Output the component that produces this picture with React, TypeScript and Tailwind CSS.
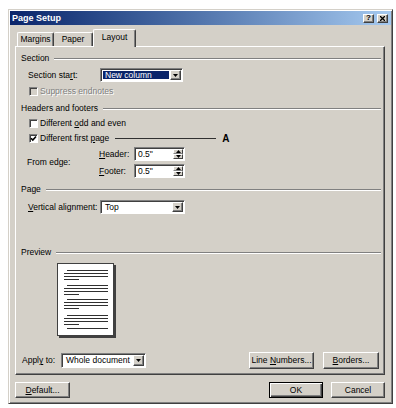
import React from "react";

const raised =
  "border border-t-white border-l-white border-r-[#404040] border-b-[#404040] shadow-[inset_-1px_-1px_#808080]";
const sunken =
  "border border-t-[#808080] border-l-[#808080] border-r-white border-b-white shadow-[inset_1px_1px_#404040]";

function DownTri() {
  return (
    <svg width="5" height="3" viewBox="0 0 5 3">
      <path d="M0 0 H5 L2.5 3 Z" fill="black" />
    </svg>
  );
}

function UpTri() {
  return (
    <svg width="5" height="3" viewBox="0 0 5 3">
      <path d="M0 3 H5 L2.5 0 Z" fill="black" />
    </svg>
  );
}

function Check({ checked, disabled }: { checked?: boolean; disabled?: boolean }) {
  return (
    <span
      className={`w-[9px] h-[9px] shrink-0 flex items-center justify-center ${sunken} ${
        disabled ? "bg-[#d4d0c8]" : "bg-white"
      }`}
    >
      {checked ? (
        <svg width="7" height="7" viewBox="0 0 7 7">
          <path d="M1 3.2 L2.8 5 L6 1.5" stroke="black" strokeWidth="1.6" fill="none" />
        </svg>
      ) : null}
    </span>
  );
}

function Combo({
  className,
  text,
  selected,
}: {
  className: string;
  text: string;
  selected?: boolean;
}) {
  return (
    <div className={`${sunken} bg-white flex items-stretch p-px ${className}`}>
      <div className="flex-1 flex items-stretch p-px">
        <span
          className={`flex-1 flex items-center pl-[2px] ${
            selected ? "bg-[#0a246a] text-white" : ""
          }`}
        >
          {text}
        </span>
      </div>
      <div className={`w-[11px] bg-[#d4d0c8] flex items-center justify-center ${raised}`}>
        <DownTri />
      </div>
    </div>
  );
}

function Spin({ value }: { value: string }) {
  return (
    <div className={`w-[51px] h-[14px] ${sunken} bg-white flex p-px`}>
      <div className="flex-1 flex items-center pl-[2px]">{value}</div>
      <div className="w-[10px] flex flex-col">
        <div className="flex-1 bg-[#d4d0c8] flex items-center justify-center border border-t-white border-l-white border-r-[#404040] border-b-[#808080]">
          <UpTri />
        </div>
        <div className="flex-1 bg-[#d4d0c8] flex items-center justify-center border border-t-white border-l-white border-r-[#404040] border-b-[#404040]">
          <DownTri />
        </div>
      </div>
    </div>
  );
}

function Btn({
  className,
  children,
  isDefault,
}: {
  className: string;
  children: React.ReactNode;
  isDefault?: boolean;
}) {
  return (
    <div
      className={`flex items-center justify-center bg-[#d4d0c8] ${
        isDefault
          ? "border border-black shadow-[inset_1px_1px_white,inset_-1px_-1px_#404040,inset_-2px_-2px_#808080]"
          : raised
      } ${className}`}
    >
      {children}
    </div>
  );
}

function GroupHead({ label, className }: { label: string; className: string }) {
  return (
    <div className={`flex items-center h-[13px] pr-[3px] ${className}`}>
      <span>{label}</span>
      <div className="flex-1 ml-[5px] h-[2px] border-t border-t-[#808080] border-b border-b-white" />
    </div>
  );
}

function PreviewPage() {
  const groups = [7, 22, 36, 52];
  return (
    <svg width="60" height="76" viewBox="0 0 60 76">
      <rect x="0.5" y="0.5" width="56" height="72" fill="white" stroke="#404040" />
      <path d="M58 2 V74 H2" stroke="#404040" strokeWidth="2" fill="none" />
      {groups.map((y) => (
        <g key={y} stroke="#303030" strokeWidth="1">
          <line x1="10" y1={y + 0.5} x2="51" y2={y + 0.5} />
          <line x1="7" y1={y + 3.5} x2="51" y2={y + 3.5} />
          <line x1="7" y1={y + 6.5} x2="51" y2={y + 6.5} />
          <line x1="7" y1={y + 9.5} x2="22" y2={y + 9.5} />
        </g>
      ))}
      <line x1="10" y1="65.5" x2="51" y2="65.5" stroke="#303030" strokeWidth="1" />
    </svg>
  );
}

export default function App() {
  return (
    <div className="w-[396px] h-[408px] bg-white pl-[8px] pt-[9px] font-['Liberation_Sans',Arial,sans-serif] text-[8.5px] leading-none text-black">
      <div className="w-[385px] h-[395px] bg-[#d4d0c8] border border-[#d4d0c8] border-r-[#404040] border-b-[#404040] shadow-[inset_1px_1px_white,inset_-1px_-1px_#808080] p-px flex flex-col">
        {/* title bar */}
        <div className="h-[14px] flex items-center bg-linear-to-r from-[#0a246a] to-[#a6caf0] pl-[2px] pr-[3px]">
          <span className="text-white font-bold text-[9px]">Page Setup</span>
          <div className="ml-auto flex gap-[3px]">
            <div className={`w-[11px] h-[9px] bg-[#d4d0c8] flex items-center justify-center text-[8px] font-bold ${raised}`}>
              ?
            </div>
            <div className={`w-[11px] h-[9px] bg-[#d4d0c8] flex items-center justify-center ${raised}`}>
              <svg width="5" height="5" viewBox="0 0 5 5">
                <path d="M0 0 L5 5 M5 0 L0 5" stroke="black" strokeWidth="1.3" />
              </svg>
            </div>
          </div>
        </div>

        <div className="flex flex-col pl-[5px]">
          {/* tabs */}
          <div className="mt-[4px] h-[17px] flex items-end pl-[2px]">
            <div className="w-[37px] h-[14px] flex items-center justify-center border-t border-l border-t-white border-l-white border-r border-r-[#404040] shadow-[inset_-1px_0_#808080] rounded-t-[2px]">
              Margins
            </div>
            <div className="w-[39px] h-[14px] flex items-center justify-center border-t border-t-white border-r border-r-[#404040] shadow-[inset_-1px_0_#808080] rounded-t-[2px]">
              Paper
            </div>
            <div className="relative z-10 -mb-px w-[43px] h-[18px] bg-[#d4d0c8] flex items-center justify-center pb-[2px] border-t border-l border-t-white border-l-white border-r border-r-[#404040] shadow-[inset_-1px_0_#808080] rounded-t-[2px]">
              Layout
            </div>
          </div>

          {/* panel */}
          <div className={`w-[370px] h-[329px] pl-[5px] flex flex-col ${raised}`}>
            <GroupHead label="Section" className="mt-[5px]" />

            <div className="mt-[3px] h-[14px] flex items-center">
              <span className="ml-[7px] w-[72px]">
                Section sta<span className="underline">r</span>t:
              </span>
              <Combo className="w-[83px] h-[14px]" text="New column" selected />
            </div>

            <div className="mt-[4px] h-[11px] flex items-center gap-[2px] pl-[8px]">
              <Check disabled />
              <span className="text-[#808080] [text-shadow:1px_1px_0_white]">Suppress endnotes</span>
            </div>

            <GroupHead label="Headers and footers" className="mt-[5px]" />

            <div className="mt-[3px] h-[11px] flex items-center gap-[2px] pl-[8px]">
              <Check />
              <span>
                Different <span className="underline">o</span>dd and even
              </span>
            </div>

            <div className="mt-[4px] h-[11px] flex items-center gap-[2px] pl-[8px]">
              <Check checked />
              <span>
                Different first <span className="underline">p</span>age
              </span>
              <div className="ml-[4px] w-[101px] h-px bg-[#303030]" />
              <span className="ml-[4px] font-bold text-[10px]">A</span>
            </div>

            <div className="mt-[3px] h-[31px] flex">
              <div className="w-[78px] pl-[6px] flex items-center">From edge:</div>
              <div className="flex flex-col gap-[3px]">
                <div className="h-[14px] flex items-center">
                  <span className="w-[35px]">
                    <span className="underline">H</span>eader:
                  </span>
                  <Spin value={'0.5"'} />
                </div>
                <div className="h-[14px] flex items-center">
                  <span className="w-[35px]">
                    <span className="underline">F</span>ooter:
                  </span>
                  <Spin value={'0.5"'} />
                </div>
              </div>
            </div>

            <GroupHead label="Page" className="mt-[5px]" />

            <div className="mt-[4px] h-[14px] flex items-center">
              <span className="ml-[7px] w-[72px]">
                <span className="underline">V</span>ertical alignment:
              </span>
              <Combo className="w-[85px] h-[14px]" text="Top" />
            </div>

            <GroupHead label="Preview" className="mt-[32px]" />

            <div className="mt-[4px] h-[76px] pl-[36px]">
              <PreviewPage />
            </div>

            <div className="mt-[13px] h-[17px] flex items-center pr-[5px]">
              <span className="ml-[1px] w-[39px]">
                Appl<span className="underline">y</span> to:
              </span>
              <Combo className="w-[85px] h-[15px]" text="Whole document" />
              <Btn className="ml-auto w-[65px] h-[17px]">
                <span>
                  Line <span className="underline">N</span>umbers...
                </span>
              </Btn>
              <Btn className="ml-[9px] w-[56px] h-[17px]">
                <span>
                  <span className="underline">B</span>orders...
                </span>
              </Btn>
            </div>
          </div>

          {/* bottom buttons */}
          <div className="mt-[7px] w-[370px] flex">
            <Btn className="w-[55px] h-[16px]">
              <span>
                <span className="underline">D</span>efault...
              </span>
            </Btn>
            <Btn className="ml-auto w-[54px] h-[16px]" isDefault>
              OK
            </Btn>
            <Btn className="ml-[8px] w-[54px] h-[16px]">Cancel</Btn>
          </div>
        </div>
      </div>
    </div>
  );
}
